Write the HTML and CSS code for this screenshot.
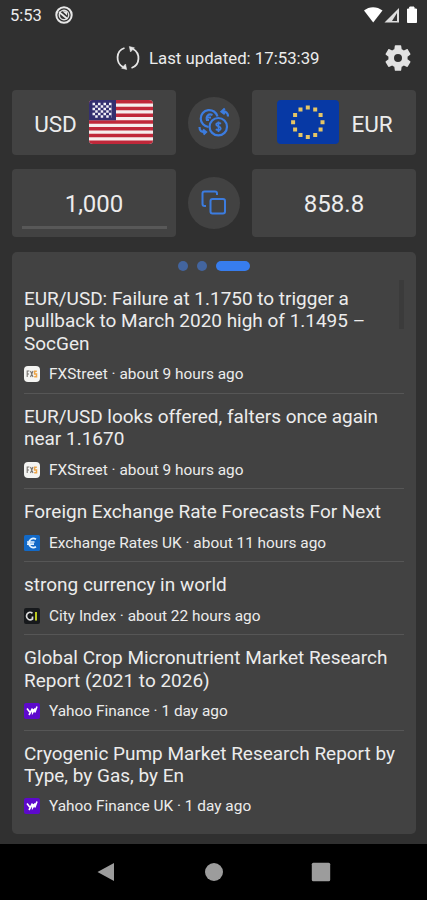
FILE: index.html
```html
<!DOCTYPE html>
<html lang="en">
<head>
<meta charset="utf-8">
<title>Currency converter</title>
<link rel="stylesheet" href="styles.css">
</head>
<body>
<svg class="defs" width="0" height="0" aria-hidden="true">
  <defs>
    <g id="fx-logo">
      <rect width="16" height="16" rx="4" fill="#f4f4f2"/>
      <path d="M3.2 11V5H5.4M3.2 8H5M6.5 5L9 11M9 5L6.500 11" fill="none" stroke="#77736f" stroke-width="1.1"/>
      <path d="M12.8 5.300H10.600V8H12.500V10.700H10.200" fill="none" stroke="#eda548" stroke-width="1.500"/>
    </g>
    <g id="yahoo-logo">
      <rect width="16" height="16" rx="2" fill="#5d09cc"/>
      <path d="M3 5.500L5.700 9M8.500 5.500L5 12M8.700 6V9.500L11.200 5.500M10.800 9.500L13 3.500" fill="none" stroke="#fff" stroke-width="1.600"/>
    </g>
  </defs>
</svg>
<div class="app">
  <div class="status">
    <span class="clock">5:53</span>
    <svg class="status-badge" width="18" height="18" viewBox="0 0 18 18">
      <circle cx="9" cy="9" r="7.700" fill="none" stroke="#e8e8e8" stroke-width="2"/>
      <circle cx="9" cy="9" r="4.700" fill="none" stroke="#ddd" stroke-width="1.500"/>
      <path d="M4 6L12.500 13" stroke="#e8e8e8" stroke-width="1.800"/>
      <path d="M7.500 5.200H12V9.500Z" fill="#e8e8e8"/>
    </svg>
    <svg class="signals" width="56" height="18" viewBox="0 0 56 18">
      <path d="M1 4.500C6 0 14 0 19.500 4.500L10.200 16.500Z" fill="#fff"/>
      <path d="M21.500 16.500L36 2V16.500Z" fill="#ddd"/>
      <path d="M29 15L34 7V15Z" fill="#343434"/>
      <path d="M44.500 3H46.700V1H51V3H53.500V16.500H44.500Z" fill="#fff" stroke="#fff" stroke-linejoin="round"/>
    </svg>
  </div>

  <div class="toolbar">
    <svg class="sync" width="24" height="26" viewBox="0 0 24 26" fill="none" stroke="#e6e6e6" stroke-width="1.800">
      <path d="M8.500 3C-0.500 6-0.500 18 7 22M15.500 23C24.500 20 24.500 8 17 4"/>
      <path d="M18.500 2.800L13.300 1.500L14.500 7Z M5.500 23.200L10.700 24.500L9.500 19Z" fill="#e6e6e6" stroke-width="0.500"/>
    </svg>
    <span class="updated">Last updated: 17:53:39</span>
    <svg class="gear" width="32" height="32" viewBox="0 0 24 24" fill="#e2e2e2">
      <path d="M19.140 12.940c.040-.300.060-.610.060-.940s-.020-.640-.070-.940l2.030-1.580c.180-.140.230-.410.120-.610l-1.920-3.320c-.120-.220-.370-.290-.590-.220l-2.390.960c-.500-.380-1.030-.700-1.620-.940L14.400 2.810c-.040-.240-.240-.410-.480-.410h-3.840c-.240 0-.430.170-.470.410L9.250 5.350c-.590.240-1.130.570-1.620.940L5.240 5.330c-.220-.080-.470 0-.590.220L2.740 8.870c-.120.210-.080.470.120.610l2.030 1.580c-.050.300-.090.630-.090.940s.020.640.070.940l-2.030 1.580c-.180.140-.230.410-.120.610l1.920 3.320c.120.220.370.290.590.220l2.390-.960c.500.380 1.030.700 1.620.940l.360 2.540c.050.240.240.410.480.410h3.840c.240 0 .440-.170.470-.410l.360-2.540c.590-.240 1.130-.560 1.620-.940l2.390.960c.220.080.470 0 .590-.220l1.920-3.320c.120-.220.070-.470-.120-.610ZM12 15a3 3 0 1 1 0-6a3 3 0 0 1 0 6Z"/>
    </svg>
  </div>

  <div class="converter">
    <div class="card currency from">
      <span class="code">USD</span>
      <svg class="flag" width="64" height="44" viewBox="0 0 64 44">
        <clipPath id="us-clip"><rect width="64" height="44" rx="4"/></clipPath>
        <g clip-path="url(#us-clip)">
          <rect width="64" height="44" fill="#f6eeee"/>
          <path d="M0 1.700H64M0 8.460H64M0 15.230H64M0 22H64M0 28.770H64M0 35.540H64M0 42.300H64" stroke="#c0283a" stroke-width="3.380"/>
          <rect width="27" height="20.300" fill="#342f70"/>
          <g stroke="#f2f0f7" stroke-width="2.400" stroke-dasharray="2.500 3">
            <path d="M3.500 4H25M3.500 9H25M3.500 14H25"/>
            <path d="M6.200 6.500H23M6.200 11.500H23M6.200 16.500H23"/>
          </g>
        </g>
      </svg>
    </div>
    <div class="round">
      <svg width="32" height="32" viewBox="0 0 32 32" fill="none" stroke="#3c7cdf" stroke-width="2.200">
        <path d="M10.500 20A8.500 8.500 0 1 1 19.500 9.500"/>
        <circle cx="20.300" cy="19.700" r="8.700"/>
        <path d="M14.500 8C10.500 6 7.500 9.500 9 13.500M8 10.500H13M8 13H11" stroke-width="2"/>
        <path d="M23 16.700C20.800 15.200 17.800 16.200 18.300 18C18.800 19.700 22.800 19.200 22.800 21.400C22.800 23.200 19.800 23.700 17.800 22.200M20.500 14.400V25" stroke-width="1.700"/>
        <path d="M24 4.500C28 4 30 6 30 9.500M26.800 1.500L23.500 4.600L26.800 7.200M1.500 20C1.500 24 3.500 25.500 7.500 25M5 22.500L8 25L5.500 27.500"/>
      </svg>
    </div>
    <div class="card currency to">
      <svg class="flag" width="62" height="44" viewBox="0 0 62 44">
        <rect width="62" height="44" rx="4" fill="#0739a5"/>
        <path d="M28.800 5.500h4v4h-4zM36.200 7.500h4v4h-4zM41.600 12.900h4v4h-4zM43.500 20.300h4v4h-4zM41.600 27.600h4v4h-4zM36.200 33h4v4h-4zM28.800 35h4v4h-4zM21.500 33h4v4h-4zM16.100 27.600h4v4h-4zM14.100 20.300h4v4h-4zM16.100 12.900h4v4h-4zM21.500 7.500h4v4h-4z" fill="#e5c565"/>
      </svg>
      <span class="code">EUR</span>
    </div>
    <div class="card amount input"><span>1,000</span></div>
    <div class="round">
      <svg width="26" height="26" viewBox="0 0 26 26" fill="none" stroke="#3c7cdf" stroke-width="2">
        <path d="M5 16H3.500Q1.500 16 1.500 14V3.500Q1.500 1.500 3.500 1.500H14Q16 1.500 16 3.500V5"/>
        <rect x="9.500" y="9" width="14.500" height="14.500" rx="2"/>
      </svg>
    </div>
    <div class="card amount"><span>858.8</span></div>
  </div>

  <div class="news">
    <div class="pager"><i></i><i></i><i class="active"></i></div>
    <div class="scrollbar"></div>
    <article>
      <h2>EUR/USD: Failure at 1.1750 to trigger a<br>pullback to March 2020 high of 1.1495 –<br>SocGen</h2>
      <p><svg width="16" height="16"><use href="#fx-logo"/></svg><span>FXStreet · about 9 hours ago</span></p>
    </article>
    <article>
      <h2>EUR/USD looks offered, falters once again<br>near 1.1670</h2>
      <p><svg width="16" height="16"><use href="#fx-logo"/></svg><span>FXStreet · about 9 hours ago</span></p>
    </article>
    <article>
      <h2>Foreign Exchange Rate Forecasts For Next</h2>
      <p><svg width="16" height="16" viewBox="0 0 16 16"><rect width="16" height="16" rx="1.500" fill="#1269c7"/><path d="M12 4.300C8.500 2 5 4.500 5 8S8.500 14 12 11.700M3 7H10.500M3 9.200H10" fill="none" stroke="#e4f2ff" stroke-width="1.700"/></svg><span>Exchange Rates UK · about 11 hours ago</span></p>
    </article>
    <article>
      <h2>strong currency in world</h2>
      <p><svg width="16" height="16" viewBox="0 0 16 16"><rect width="16" height="16" rx="2" fill="#17191c"/><path d="M8.500 5.200C5.500 3 2.500 5 2.500 8S5.500 13 8.500 11V8.500" fill="none" stroke="#ddd" stroke-width="1.700"/><path d="M12 4V12.500" stroke="#cfdd22" stroke-width="1.800"/></svg><span>City Index · about 22 hours ago</span></p>
    </article>
    <article>
      <h2>Global Crop Micronutrient Market Research<br>Report (2021 to 2026)</h2>
      <p><svg width="16" height="16"><use href="#yahoo-logo"/></svg><span>Yahoo Finance · 1 day ago</span></p>
    </article>
    <article>
      <h2>Cryogenic Pump Market Research Report by<br>Type, by Gas, by En</h2>
      <p><svg width="16" height="16"><use href="#yahoo-logo"/></svg><span>Yahoo Finance UK · 1 day ago</span></p>
    </article>
  </div>
</div>
<nav class="navbar">
  <svg width="20" height="20" viewBox="0 0 20 20"><path d="M1.500 10L18 1V19Z" fill="#9c9c9c"/></svg>
  <svg width="20" height="20" viewBox="0 0 20 20"><circle cx="10" cy="10" r="9" fill="#9c9c9c"/></svg>
  <svg width="20" height="20" viewBox="0 0 20 20"><rect x="0.800" y="0.800" width="18.400" height="18.400" rx="1.500" fill="#9c9c9c"/></svg>
</nav>
</body>
</html>
```
FILE: styles.css
```css
* { box-sizing: border-box; }
body {
  margin: 0;
  width: 427px;
  height: 900px;
  overflow: hidden;
  background: #000;
  color: #ececec;
  font-family: Roboto, sans-serif;
}
svg { display: block; flex: none; }
.defs { position: absolute; }
.app { height: 844px; background: #303030; }
.status { display: flex; align-items: center; height: 30px; padding: 0 8px 0 10px; }
.clock { width: 45px; font-size: 16.5px; }
.signals { margin-left: auto; }
.toolbar { display: flex; align-items: center; height: 60px; padding: 0 13px 4px 116px; }
.updated { margin-left: 9px; font-size: 16.8px; white-space: nowrap; }
.gear { margin-left: auto; }
.converter {
  display: grid;
  grid-template-columns: 164px 52px 164px;
  grid-template-rows: 65px 68px;
  gap: 14px 12px;
  padding: 0 12px;
  align-items: center;
}
.card {
  display: flex;
  align-items: center;
  justify-content: center;
  height: 100%;
  border-radius: 4px;
  background: #424242;
  white-space: nowrap;
}
.currency { gap: 12px; padding-bottom: 2px; }
.from { padding-right: 1px; }
.to { padding-left: 2px; }
.code { font-size: 22.5px; padding-top: 4px; }
.amount { position: relative; padding-top: 2px; font-size: 24px; }
.input::after {
  content: "";
  position: absolute;
  left: 10px;
  right: 9px;
  bottom: 8px;
  height: 3px;
  background: #585858;
}
.round {
  display: grid;
  place-items: center;
  width: 52px;
  height: 52px;
  border-radius: 50%;
  background: #424242;
}
.news {
  position: relative;
  height: 582px;
  margin: 15px 11px 0 12px;
  padding: 9px 12px 0;
  border-radius: 5px;
  background: #424242;
}
.pager { display: flex; align-items: center; justify-content: center; gap: 9px; height: 10px; }
.pager i { width: 10px; height: 10px; border-radius: 5px; background: #43659f; }
.pager .active { width: 34px; background: #377dee; }
.scrollbar { position: absolute; top: 28px; right: 12px; width: 5px; height: 49px; background: #3b3b3b; }
article { padding: 12px 0 10.6px; border-bottom: 1px solid #565656; }
article:last-child { border-bottom: 0; }
.scrollbar + article { padding-top: 17px; }
h2 {
  margin: 0;
  font-size: 18.98px;
  font-weight: 400;
  line-height: 22.4px;
  white-space: nowrap;
}
p { display: flex; align-items: center; gap: 9px; height: 16px; margin: 11px 0 0; font-size: 15.4px; line-height: 16px; white-space: nowrap; }
.navbar { display: flex; align-items: center; justify-content: space-between; height: 56px; padding: 0 96px; }
```
